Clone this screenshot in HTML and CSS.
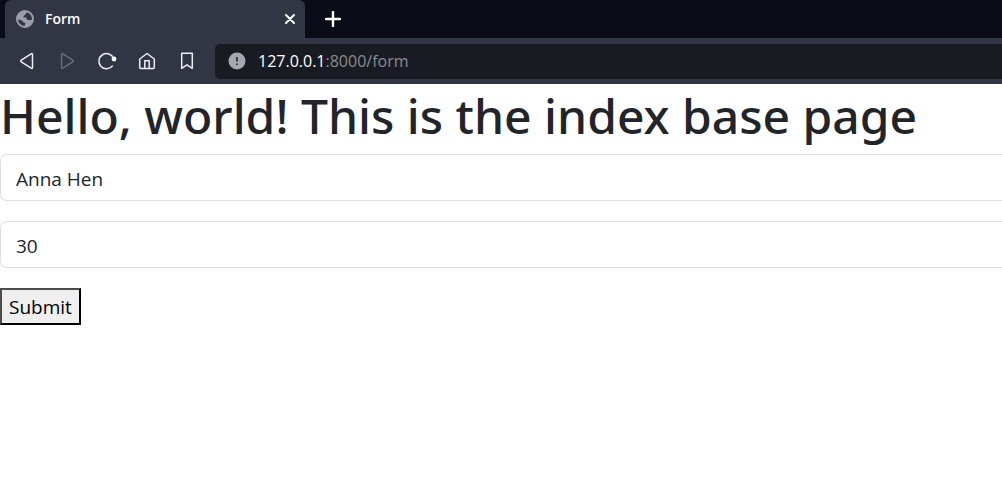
FILE: index.html
```html
<!DOCTYPE html>
<html lang="en">
<head>
<meta charset="utf-8">
<title>Form</title>
<link rel="stylesheet" href="styles.css">
</head>
<body>
<header class="browser">
  <div class="tabs">
    <div class="tab">
      <svg class="favicon" viewBox="0 0 18 18" aria-hidden="true">
        <circle cx="9" cy="9" r="8" fill="none" stroke="#9b9da8" stroke-width="2"/>
        <path d="M1.500 6C3 3 6 1.500 9.500 1.500C11 2.500 10.500 4 9 4.500C8.500 6 7 6 7.500 7.500H10C11 8.500 10.500 10 12 10H16.500C16 13 13.500 16 9.500 16.500C8 16 9 14 9.500 13.500C9 12.500 7.500 13 7 12C6.500 10 4 10 1.500 9.500Z" fill="#9b9da8"/>
      </svg>
      <span class="tab-title">Form</span>
      <button class="tab-close" type="button" aria-label="Close tab">
        <svg viewBox="0 0 10 10" width="10" height="10"><path d="M1 1L9 9M9 1L1 9" stroke="#fff" stroke-width="2" stroke-linecap="round"/></svg>
      </button>
    </div>
    <button class="new-tab" type="button" aria-label="New tab">
      <svg viewBox="0 0 16 16" width="16" height="16"><path d="M8 1V15M1 8H15" stroke="#fff" stroke-width="2.400" stroke-linecap="round"/></svg>
    </button>
  </div>
  <nav class="toolbar" aria-label="Browser">
    <button class="tool" type="button" aria-label="Back">
      <svg viewBox="0 0 20 20"><path d="M15.500 3.600V16.400Q15.500 18.100 14.100 17.200L4.300 10.800Q3.200 10 4.300 9.200L14.100 2.800Q15.500 1.900 15.500 3.600Z"/></svg>
    </button>
    <button class="tool tool-off" type="button" aria-label="Forward" disabled>
      <svg viewBox="0 0 20 20"><path d="M4.500 3.600V16.400Q4.500 18.100 5.900 17.200L15.700 10.800Q16.800 10 15.700 9.200L5.900 2.800Q4.500 1.900 4.500 3.600Z"/></svg>
    </button>
    <button class="tool" type="button" aria-label="Reload">
      <svg viewBox="0 0 20 20"><path d="M15.700 14.600A7.600 7.600 0 1 1 16.600 7.400"/><circle cx="17" cy="8" r="2.400" class="solid"/></svg>
    </button>
    <button class="tool" type="button" aria-label="Home">
      <svg viewBox="0 0 20 20"><path d="M2.700 8L10 2.500L17.300 8V16.500Q17.300 17.400 16.400 17.400H3.600Q2.700 17.400 2.700 16.500ZM7.800 17V9.800H12.200V17"/></svg>
    </button>
    <button class="tool" type="button" aria-label="Bookmark">
      <svg viewBox="0 0 20 20"><path d="M4.700 2.200H15.300V17.300L10 13.800L4.700 17.300Z"/></svg>
    </button>
    <div class="address">
      <svg viewBox="0 0 18 18" width="18" height="18" aria-hidden="true"><circle cx="9" cy="9" r="8.500" fill="#a5a7b0"/><path d="M9 5V9.500M9 11.500V13" stroke="#181b22" stroke-width="1.500"/></svg>
      <span class="url"><span class="host">127.0.0.1</span>:8000/form</span>
    </div>
  </nav>
</header>
<main>
  <h1 class="heading">Hello, world! This is the index base page</h1>
  <form class="form">
    <input class="field" type="text" value="Anna Hen" aria-label="Name">
    <input class="field" type="text" value="30" aria-label="Age">
    <button class="submit" type="button">Submit</button>
  </form>
</main>
</body>
</html>
```
FILE: styles.css
```css
* { box-sizing: border-box; }
body {
  margin: 0;
  background: #fff;
  color: #212529;
  font-family: "Segoe UI", "Open Sans", "Noto Sans", sans-serif;
  font-size: 19px;
  overflow-x: hidden;
}
.browser { background: #323544; }
.tabs {
  display: flex;
  height: 38px;
  padding-left: 5px;
  background: #0b0b17;
}
.tab {
  display: flex;
  align-items: center;
  width: 300px;
  padding: 0 8px 0 11px;
  background: #323544;
  border-radius: 6px 6px 0 0;
}
.favicon { width: 18px; height: 18px; }
.tab-title {
  flex: 1;
  margin-left: 11px;
  color: #fff;
  font-size: 14px;
  font-weight: 600;
  line-height: 16px;
}
.tab-close, .new-tab, .tool {
  display: flex;
  align-items: center;
  justify-content: center;
  padding: 0;
  border: 0;
  background: none;
}
.tab-close { width: 14px; height: 20px; }
.new-tab { width: 55px; }
.toolbar {
  display: flex;
  align-items: center;
  height: 46px;
  padding-left: 7px;
}
.tool { width: 40px; height: 36px; }
.tool svg {
  width: 20px;
  height: 20px;
  fill: none;
  stroke: #eceef5;
  stroke-width: 1.500;
  stroke-linejoin: round;
}
.tool .solid { fill: #fff; stroke: none; }
.tool-off svg { stroke: #686b79; }
.address {
  display: flex;
  flex: 1;
  align-items: center;
  gap: 12px;
  height: 35px;
  margin-left: 8px;
  padding-left: 13px;
  background: #181b22;
  border-radius: 5px 0 0 5px;
}
.url { color: #898b8f; font-size: 16px; }
.host { color: #fff; }
.heading {
  margin: 0;
  padding: 2px 0 8px;
  font-family: "Segoe UI", "Noto Sans", "Open Sans", sans-serif;
  font-size: 48px;
  font-weight: 500;
  line-height: 60px;
  white-space: nowrap;
}
.form { display: flex; flex-direction: column; align-items: flex-start; gap: 20px; }
.field {
  width: 100%;
  height: 47px;
  padding: 6px 15px 4px;
  border: 1px solid #dcdee0;
  border-right: 0;
  border-radius: 7px 0 0 7px;
  background: #fff;
  color: #212529;
  font: inherit;
}
.submit {
  height: 37px;
  padding: 0 7px;
  border: 2px solid;
  border-color: #4c4c4c #000 #000 #4c4c4c;
  background: #efefef;
  color: #000;
  font: inherit;
  line-height: 32px;
}
```
